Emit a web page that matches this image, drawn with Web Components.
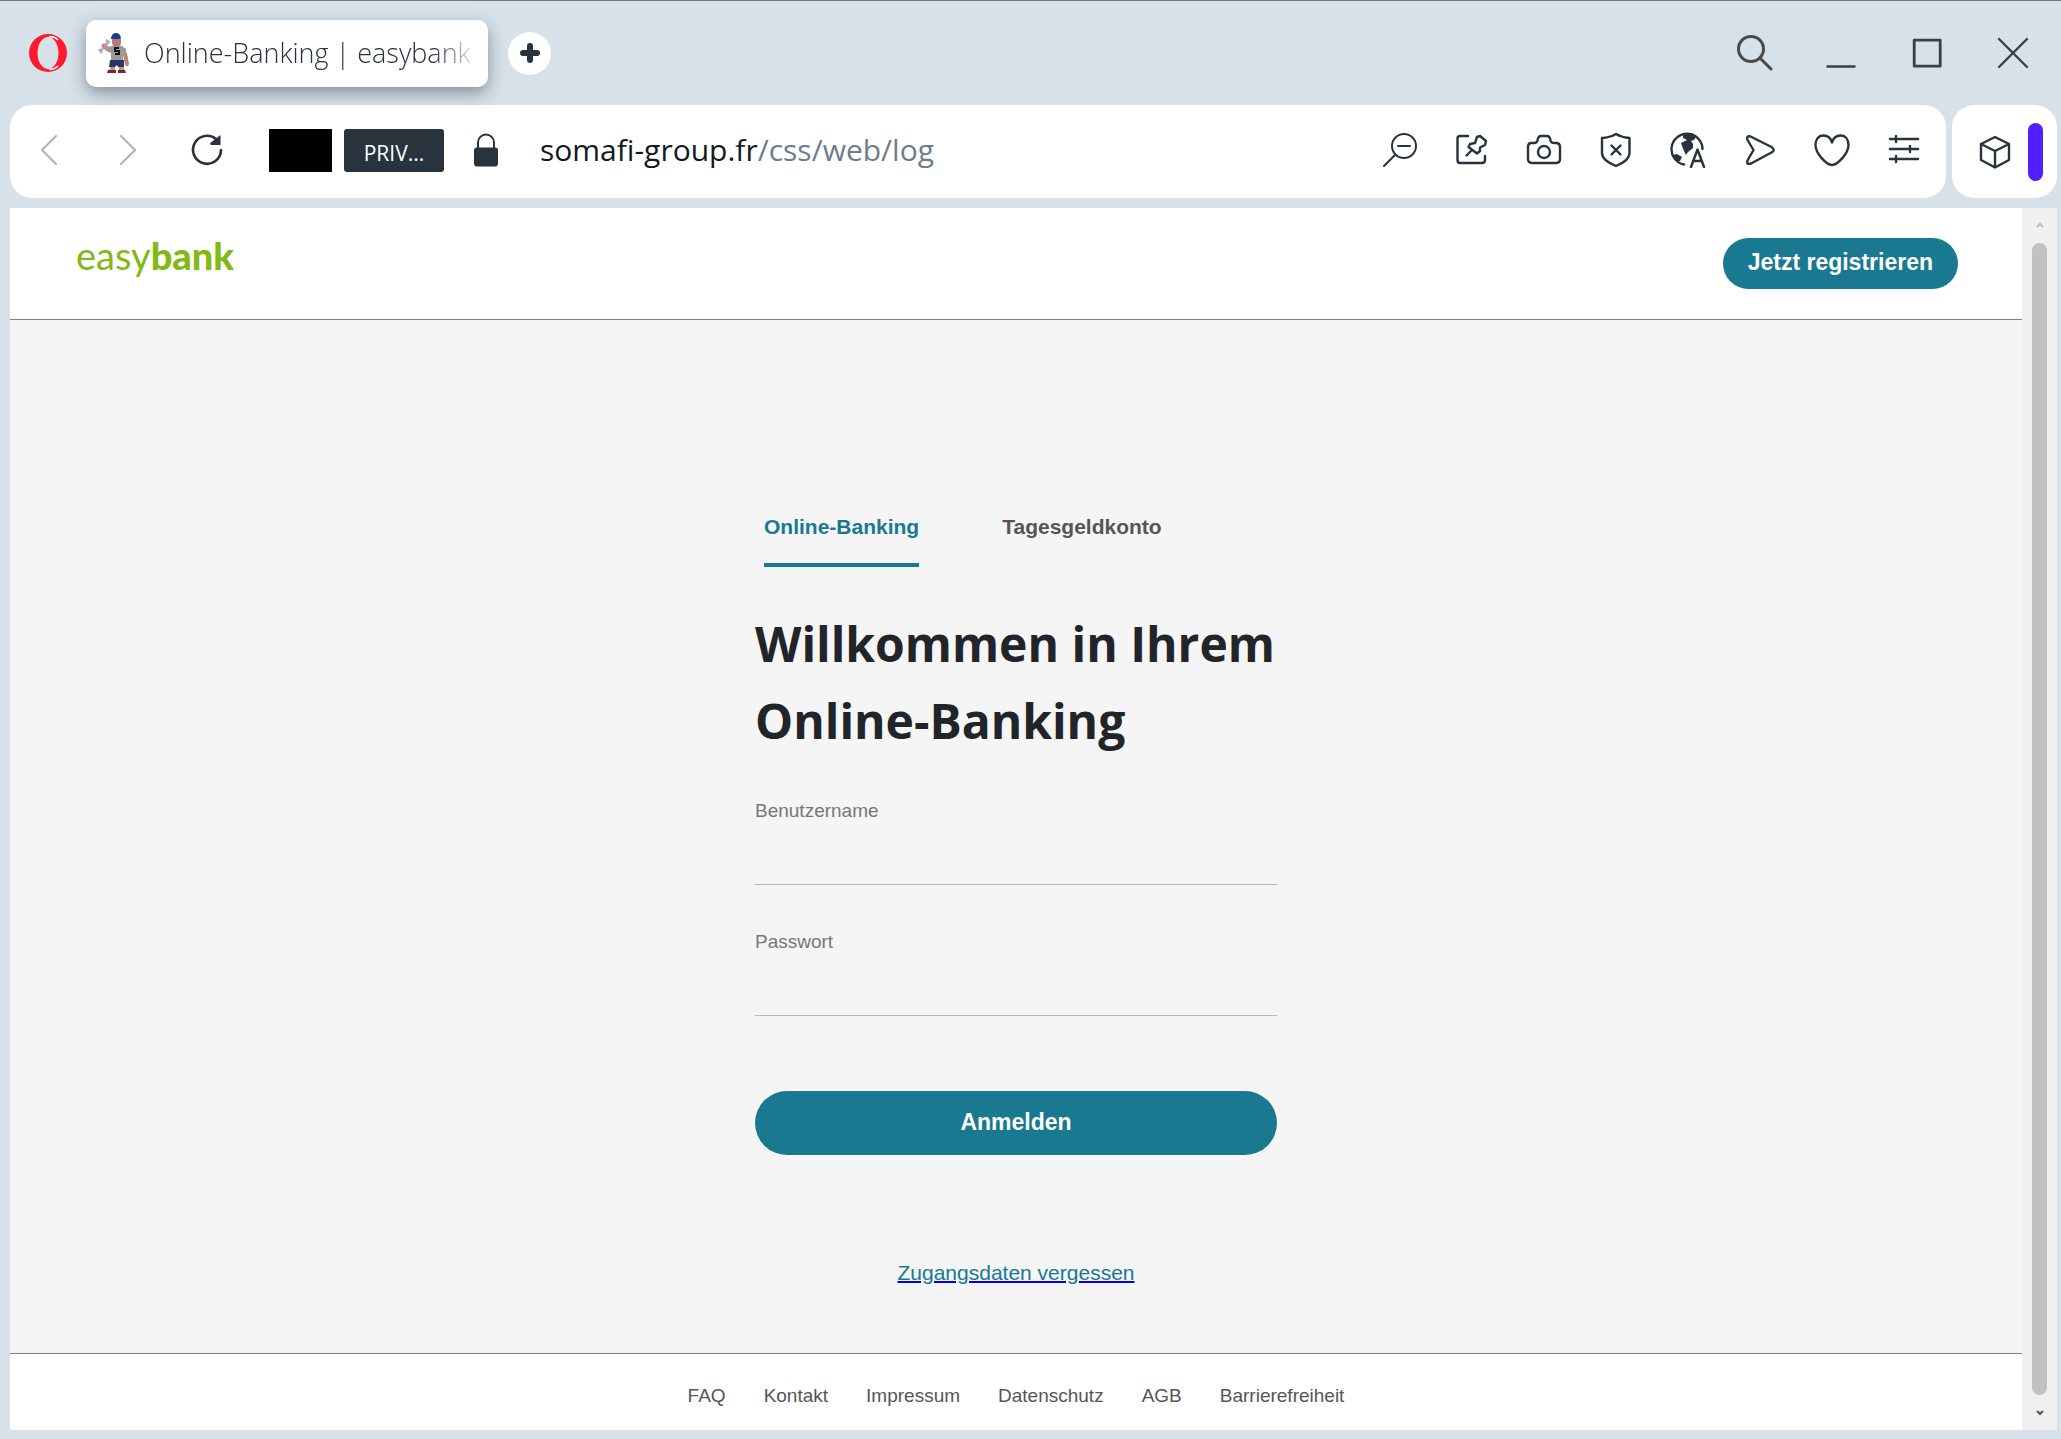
<!DOCTYPE html>
<html lang="de">
<head>
<meta charset="utf-8">
<title>Online-Banking | easybank</title>
<style>
  html, body{
    height:100%;
    margin:0;
  }
  body{
    font-family: "Liberation Sans", Arial, sans-serif;
    background-color:#d7e1ea;
  }
</style>
</head>
<body>

<browser-window>
  <tab-strip slot="tabs">Online-Banking | easybank</tab-strip>
  <address-bar slot="address">
    <span slot="host">somafi-group.fr</span><span slot="path">/css/web/log</span>
  </address-bar>

  <bank-header slot="page">Jetzt registrieren</bank-header>
  <login-panel slot="page">
    <span slot="headline">Willkommen in Ihrem<br>Online-Banking</span>
    <text-field slot="fields" label="Benutzername" type="text"></text-field>
    <text-field slot="fields" label="Passwort" type="password"></text-field>
    <span slot="submit">Anmelden</span>
    <span slot="forgot">Zugangsdaten vergessen</span>
  </login-panel>
  <bank-footer slot="page"></bank-footer>
</browser-window>

<script>
(function(){

  // registers an element whose shadow root is cloned from a template
  function define(name, html, ready){
    const template = document.createElement("template");
    template.innerHTML = html;

    window.customElements.define(name, class extends HTMLElement{
      constructor() {
        super();
        this.attachShadow({ mode: "open" });
        this.shadowRoot.appendChild(template.content.cloneNode(true));
      }

      connectedCallback() {
        if (ready) ready(this, this.shadowRoot);
      }
    });
  }

  // stroke icons on a 36px grid
  const icons = {
    back: '<path stroke="#b4b7ba" d="M25 4 11 18 25 32"/>',
    forward: '<path stroke="#b4b7ba" d="M11 4 25 18 11 32"/>',
    reload: '<path stroke-width="2.6" d="M32 18A14 14 0 1 1 27.500 7.500"/><path fill="currentColor" stroke="none" d="M31.500 3V13H23C21 13 20.500 11.500 22 10.500Z"/>',
    lock: '<path stroke-width="2" d="M10 17V10.500a8 8 0 0 1 16 0V17"/><rect x="6" y="15.500" width="24" height="19" rx="3" fill="currentColor" stroke="none"/>',
    zoom: '<circle cx="22" cy="14" r="12" stroke-width="2"/><path stroke-width="2" d="M16 14H28M13 23 2 34"/>',
    pin: '<path d="M14 4H6Q3.500 4 3.500 6.500V28Q3.500 31 6 31H28Q31 31 31 28V24"/><path d="M23 5 26 4 32 9 31 13 26 15.500 26 19 23 21.500 14.500 15 16 12 21 11ZM18 18 12.500 23.500"/>',
    camera: '<path d="M5 11H8Q11 11 11.500 8.500 12 4 15 4H21Q24 4 24.500 8.500 25 11 28 11H30Q34 11 34 15V27Q34 31 30 31H6Q2 31 2 27V15Q2 11 5 11Z"/><circle cx="18" cy="20" r="6"/>',
    shield: '<path d="M18 2Q24 5.500 31.500 6V21C31.500 28 23 32 18 34 13 32 4 28 4 21V6Q12 5.500 18 2Z"/><path d="M13.500 13.500 22.500 22.500M22.500 13.500 13.500 22.500"/>',
    translate: '<path d="M14 32.500A15.500 15.500 0 1 1 32.500 17"/><path fill="currentColor" stroke="none" d="M13 1.500 23 1.500 26 5 24 8 21 9 23 12 23 16 18 20 16 23 14 19 12 14 11 11 15 9 17 8 13 6ZM3 23 7 22 12 25 10 29 7 29Z"/><path d="M21 35 27.500 17.500 34 35M23 29H32"/>',
    send: '<path d="M8.500 4.500 29.500 15Q34 18 29.500 20.500L9 31.500Q4 33 5.500 28.500L11.500 18 5.500 8Q4 3.500 8.500 4.500Z"/>',
    heart: '<path d="M18 10.500Q20 3.500 26.500 3.500C32 3.500 34.500 8 34.500 13 34.500 22 23 33 18 33 13 33 1.500 22 1.500 13 1.500 8 4 3.500 9.500 3.500Q16 3.500 18 10.500Z"/>',
    sliders: '<path d="M4 7H32M4 17H32M4 27H32M10 4V10M24 14V20M10 24V30"/>',
    cube: '<path d="M18 3 32 10V26L18 33.500 4 26V10ZM4 10 18 17 32 10M18 17V33.500"/>',
    search: '<circle cx="14" cy="14" r="12.500" stroke="#4a4a4a" stroke-width="3"/><path stroke="#4a4a4a" stroke-width="3" d="M23.500 23.500 34 34"/>',
    minimize: '<path stroke="#3f3f3f" d="M4.500 31.500H31.500"/>',
    maximize: '<rect x="5.200" y="5.200" width="26" height="26" stroke="#3f3f3f" stroke-width="2.800"/>',
    close: '<path stroke="#3f3f3f" d="M4 4 32 32M32 4 4 32"/>',
    plus: '<path stroke-width="6" d="M18 11V25M11 18H25"/>'
  };

  define("tool-icon", `
  <style>
  :host{
    display:block;
    flex:none;
    width:36px;
    height:36px;
    color:#29333d;
  }
  svg{
    display:block;
    width:100%;
    height:100%;
    fill:none;
    stroke:currentColor;
    stroke-width:2.4;
    stroke-linecap:round;
    stroke-linejoin:round;
  }
  </style>
  <svg viewBox="0 0 36 36" aria-hidden="true"></svg>
  `, function(el, root){
    root.querySelector("svg").innerHTML = icons[el.getAttribute("name")];
  });


  define("tool-button", `
  <style>
  :host{
    display:block;
    flex:none;
  }
  button{
    display:block;
    border:0;
    padding:0;
    background:none;
  }
  </style>
  <button type="button"></button>
  `, function(el, root){
    const button = root.querySelector("button");
    const icon = document.createElement("tool-icon");
    icon.setAttribute("name", el.getAttribute("icon"));
    button.setAttribute("aria-label", el.getAttribute("label"));
    button.replaceChildren(icon);
  });


  define("browser-window", `
  <style>
  :host{
    display:flex;
    flex-direction:column;
    box-sizing:border-box;
    min-height:100vh;
    padding:0 4px 9px 10px;
    border-top:1px solid #777;
    background-color:#d7e1ea;
  }
  .viewport{
    display:flex;
    flex:1;
    margin-top:10px;
  }
  .page{
    display:flex;
    flex-direction:column;
    flex:1;
    background-color:#f5f5f5;
  }
  .scrollbar{
    display:flex;
    flex-direction:column;
    align-items:center;
    justify-content:space-between;
    box-sizing:border-box;
    width:35px;
    padding:13px 0;
    background-color:#f0f0f0;
  }
  .thumb{
    flex:1;
    width:15px;
    margin:14px 0;
    border-radius:8px;
    background-color:#c1c1c1;
  }
  svg{
    display:block;
    width:8px;
    height:8px;
    fill:none;
    stroke:#bbb;
    stroke-width:2;
  }
  .down{
    stroke:#555;
  }
  </style>
  <slot name="tabs"></slot>
  <slot name="address"></slot>
  <div class="viewport">
    <div class="page"><slot name="page"></slot></div>
    <div class="scrollbar">
      <svg viewBox="0 0 8 8"><path d="M1 6 4 3 7 6"/></svg>
      <div class="thumb"></div>
      <svg class="down" viewBox="0 0 8 8"><path d="M1 2 4 5 7 2"/></svg>
    </div>
  </div>
  `);


  define("tab-strip", `
  <style>
  :host{
    display:flex;
    align-items:center;
    box-sizing:border-box;
    height:104px;
    padding:0 26px 0 19px;
    font-family: "Open Sans", "Noto Sans", sans-serif;
  }
  .brand{
    flex:none;
    width:38px;
    height:38px;
    margin-right:19px;
  }
  .strip{
    display:flex;
    align-items:center;
    flex:1;
  }
  .tab{
    display:flex;
    align-items:center;
    box-sizing:border-box;
    width:402px;
    height:67px;
    padding:0 8px 0 12px;
    border-radius:10px;
    background-color:#fff;
    box-shadow:0 6px 16px rgba(50, 65, 80, .5);
  }
  .favicon{
    flex:none;
    width:32px;
    height:42px;
    margin-right:14px;
  }
  .title{
    flex:1;
    overflow:hidden;
    white-space:nowrap;
    font-size:27px;
    font-weight:300;
    line-height:40px;
    color:#29333d;
    -webkit-mask-image:linear-gradient(to right, #000 86%, transparent);
    mask-image:linear-gradient(to right, #000 86%, transparent);
  }
  .new{
    display:flex;
    align-items:center;
    justify-content:center;
    width:43px;
    height:43px;
    margin-left:20px;
    border-radius:50%;
    background-color:#fff;
  }
  .window{
    display:flex;
    gap:50px;
  }
  </style>
  <svg class="brand" viewBox="0 0 38 38"><path fill="#ff1b2d" fill-rule="evenodd" d="M19 0A19 19 0 1 1 19 38 19 19 0 1 1 19 0ZM19 3A10.500 16 0 1 0 19 35 10.500 16 0 1 0 19 3Z"/><path fill="none" stroke="#fff" stroke-width="1.500" d="M20 3Q25 2 29 6M20 35Q25 36 29 32"/></svg>
  <div class="strip">
    <div class="tab">
      <svg class="favicon" viewBox="0 0 32 42">
        <path stroke="#9bb3c0" stroke-width="2.500" d="M2 20 11 9M1 17 4 21M8 8 12 11"/>
        <path stroke="#ce8c83" stroke-width="5" stroke-linecap="round" d="M6 14 10 17"/>
        <path stroke="#bf7f73" stroke-width="4" stroke-linecap="round" d="M27 22 29 32"/>
        <path fill="#999" d="M11 15 16 13H22L28 17 28 23 25 22V30H13V21L9 19Z"/>
        <rect x="14" y="5" width="9" height="9" rx="4" fill="#b87772"/>
        <path fill="#173f8c" d="M13 6Q14 1 18 1T23 6L22 7H13Z"/>
        <path fill="#2a356b" d="M12 28H26L26 35H20L19 33 17 35H11Z"/>
        <path fill="#b99a72" d="M12 35H17V39H12ZM21 35H26V39H21Z"/>
        <path fill="#851f35" d="M10 38H18V41H9ZM20 38H27L28 41H20Z"/>
        <path fill="none" stroke="#111" stroke-width="2" d="M21 16H17V19H21V22H17"/>
      </svg>
      <span class="title"><slot></slot></span>
    </div>
    <div class="new"><tool-button icon="plus" label="Neuer Tab"></tool-button></div>
  </div>
  <div class="window">
    <tool-button icon="search" label="Suchen"></tool-button>
    <tool-button icon="minimize" label="Minimieren"></tool-button>
    <tool-button icon="maximize" label="Maximieren"></tool-button>
    <tool-button icon="close" label="Schließen"></tool-button>
  </div>
  `);


  define("address-bar", `
  <style>
  :host{
    display:flex;
    gap:6px;
    height:93px;
    font-family: "Open Sans", "Noto Sans", sans-serif;
  }
  .bar, .side{
    display:flex;
    align-items:center;
    box-sizing:border-box;
    border-radius:22px;
    background-color:#fff;
  }
  .bar{
    flex:1;
    padding:0 24px 3px 21px;
  }
  .side{
    gap:15px;
    padding:0 14px 0 25px;
  }
  .nav{
    display:flex;
    gap:43px;
    margin-right:44px;
  }
  .redacted{
    width:63px;
    height:43px;
    margin-right:12px;
    background-color:#000;
  }
  .private{
    width:100px;
    height:43px;
    margin-right:24px;
    border-radius:3px;
    background-color:#29333d;
    color:#fff;
    font-size:21px;
    font-weight:500;
    line-height:48px;
    text-align:center;
  }
  .url{
    flex:1;
    margin-left:36px;
    font-size:30px;
    line-height:44px;
    white-space:nowrap;
    color:#14191f;
  }
  .path{
    color:#6d7d8e;
  }
  .actions{
    display:flex;
    gap:36px;
  }
  .marker{
    width:15px;
    height:58px;
    border-radius:8px;
    background-color:#4f1fff;
  }
  </style>
  <div class="bar">
    <div class="nav">
      <tool-button icon="back" label="Zurück"></tool-button>
      <tool-button icon="forward" label="Vorwärts"></tool-button>
      <tool-button icon="reload" label="Neu laden"></tool-button>
    </div>
    <div class="redacted"></div>
    <div class="private">PRIV...</div>
    <tool-icon name="lock"></tool-icon>
    <div class="url"><slot name="host"></slot><span class="path"><slot name="path"></slot></span></div>
    <div class="actions">
      <tool-button icon="zoom" label="Zoom"></tool-button>
      <tool-button icon="pin" label="Anheften"></tool-button>
      <tool-button icon="camera" label="Schnappschuss"></tool-button>
      <tool-button icon="shield" label="Schutz"></tool-button>
      <tool-button icon="translate" label="Übersetzen"></tool-button>
      <tool-button icon="send" label="Senden"></tool-button>
      <tool-button icon="heart" label="Lesezeichen"></tool-button>
      <tool-button icon="sliders" label="Einstellungen"></tool-button>
    </div>
  </div>
  <div class="side">
    <tool-button icon="cube" label="Erweiterungen"></tool-button>
    <div class="marker"></div>
  </div>
  `);


  define("bank-header", `
  <style>
  :host{
    display:flex;
    align-items:center;
    justify-content:space-between;
    box-sizing:border-box;
    height:112px;
    padding:0 64px 0 66px;
    border-bottom:1px solid #808080;
    background-color:#fff;
  }
  .logo{
    padding-bottom:18px;
    font-family: Lato, sans-serif;
    font-size:38px;
    line-height:48px;
    color:#84b816;
  }
  .logo b{
    font-weight:900;
  }
  button{
    height:51px;
    padding:0 25px 3px;
    border:0;
    border-radius:26px;
    background-color:#187991;
    color:#fff;
    font-family:inherit;
    font-size:23px;
    font-weight:bold;
  }
  </style>
  <div class="logo">easy<b>bank</b></div>
  <button type="button"><slot></slot></button>
  `);


  define("text-field", `
  <style>
  :host{
    display:flex;
    flex-direction:column;
    box-sizing:border-box;
    height:131px;
  }
  label{
    font-size:19px;
    line-height:24px;
    color:#777;
  }
  input{
    box-sizing:border-box;
    width:100%;
    height:62px;
    padding:12px 0;
    border:0;
    border-bottom:1px solid #b9b9b9;
    background:none;
    font-size:19px;
  }
  </style>
  <label for="field"></label>
  <input id="field" autocomplete="off">
  `, function(el, root){
    root.querySelector("label").textContent = el.getAttribute("label");
    root.querySelector("input").type = el.getAttribute("type");
  });


  define("login-panel", `
  <style>
  :host{
    display:flex;
    flex:1;
    flex-direction:column;
    align-items:center;
    padding-top:193px;
  }
  .panel{
    display:flex;
    flex-direction:column;
    width:522px;
    max-width:100%;
  }
  nav{
    display:flex;
    gap:83px;
    padding-left:9px;
  }
  nav a{
    padding-bottom:22px;
    border-bottom:4px solid transparent;
    color:#555;
    font-size:21px;
    font-weight:bold;
    line-height:28px;
    text-decoration:none;
  }
  nav a.active{
    border-color:#187991;
    color:#187991;
  }
  h1{
    margin:38px 0 40px;
    font-family: "Open Sans", "Noto Sans", sans-serif;
    font-size:48px;
    font-weight:700;
    line-height:77px;
    color:#212529;
  }
  button{
    height:64px;
    margin-top:30px;
    padding:0 0 2px;
    border:0;
    border-radius:32px;
    background-color:#187991;
    color:#fff;
    font-family:inherit;
    font-size:23px;
    font-weight:bold;
  }
  .forgot{
    align-self:center;
    margin-top:104px;
    color:#187991;
    font-size:21px;
    line-height:28px;
    text-decoration:underline 2px #0000ee;
  }
  </style>
  <div class="panel">
    <nav>
      <a class="active" href="#">Online-Banking</a>
      <a href="#">Tagesgeldkonto</a>
    </nav>
    <h1><slot name="headline"></slot></h1>
    <slot name="fields"></slot>
    <button type="button"><slot name="submit"></slot></button>
    <a class="forgot" href="#"><slot name="forgot"></slot></a>
  </div>
  `);


  define("bank-footer", `
  <style>
  :host{
    display:flex;
    justify-content:center;
    align-items:center;
    gap:38px;
    box-sizing:border-box;
    height:77px;
    padding-top:7px;
    border-top:1px solid #808080;
    background-color:#fff;
  }
  a{
    color:#555;
    font-size:19px;
    line-height:28px;
    text-decoration:none;
  }
  </style>
  <a href="#">FAQ</a>
  <a href="#">Kontakt</a>
  <a href="#">Impressum</a>
  <a href="#">Datenschutz</a>
  <a href="#">AGB</a>
  <a href="#">Barrierefreiheit</a>
  `);

})();
</script>
</body>
</html>
